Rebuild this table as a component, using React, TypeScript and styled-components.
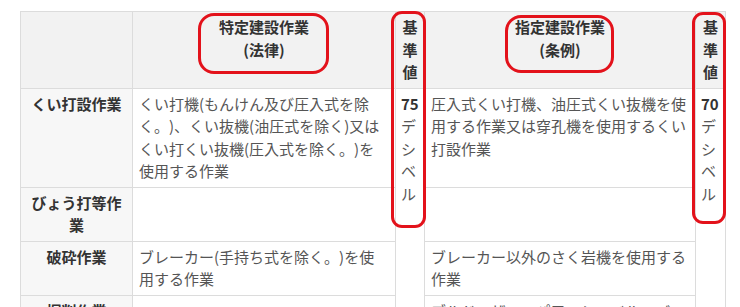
import React from "react";
import styled, { createGlobalStyle } from "styled-components";

const Global = createGlobalStyle`
  html, body { margin: 0; padding: 0; background: #ffffff; }
  body { font-family: "Noto Sans CJK JP", "Noto Sans", sans-serif; }
`;

const Page = styled.div`
  position: relative;
  padding: 11px 0 0 20px;
  width: 740px;
  box-sizing: border-box;
`;

const Table = styled.table`
  border-collapse: collapse;
  table-layout: fixed;
  width: 705px;
  font-size: 15px;
  line-height: 22.5px;
  text-spacing-trim: space-all;
  font-feature-settings: normal;
`;

const HeadCell = styled.th`
  background: #f2f2f2;
  border: 1px solid #dcdcdc;
  color: #333;
  font-weight: 700;
  padding: 4px 6px;
  text-align: center;
  vertical-align: top;
`;

const RowHead = styled.th`
  background: #f7f7f7;
  border: 1px solid #dcdcdc;
  color: #333;
  font-weight: 700;
  padding: 4px 6px;
  text-align: center;
  vertical-align: top;
`;

const Cell = styled.td`
  background: #fff;
  border: 1px solid #dcdcdc;
  color: #555;
  padding: 4px 6px;
  text-align: left;
  vertical-align: top;
`;

const ValueCell = styled.td`
  background: #fff;
  border: 1px solid #dcdcdc;
  color: #555;
  padding: 4px 5px;
  text-align: left;
  vertical-align: top;
  white-space: nowrap;
`;

const Num = styled.b`
  color: #333;
  font-weight: 700;
`;

const Mark = styled.div<{ $x: number; $y: number; $w: number; $h: number; $r: number }>`
  position: absolute;
  left: ${(p) => p.$x}px;
  top: ${(p) => p.$y}px;
  width: ${(p) => p.$w}px;
  height: ${(p) => p.$h}px;
  border: 3px solid #e3121b;
  border-radius: ${(p) => p.$r}px;
  box-sizing: border-box;
  pointer-events: none;
`;

const Value = ({ n }: { n: string }) => (
  <>
    <Num>{n}</Num>
    <br />デ<br />シ<br />ベ<br />ル
  </>
);

export default function App() {
  return (
    <>
      <Global />
      <Page>
        <Table>
          <colgroup>
            <col style={{ width: 112 }} />
            <col style={{ width: 263 }} />
            <col style={{ width: 29 }} />
            <col style={{ width: 271 }} />
            <col style={{ width: 30 }} />
          </colgroup>
          <thead>
            <tr>
              <HeadCell />
              <HeadCell>
                特定建設作業
                <br />(法律)
              </HeadCell>
              <HeadCell>
                基<br />準<br />値
              </HeadCell>
              <HeadCell>
                指定建設作業
                <br />(条例)
              </HeadCell>
              <HeadCell>
                基<br />準<br />値
              </HeadCell>
            </tr>
          </thead>
          <tbody>
            <tr>
              <RowHead>くい打設作業</RowHead>
              <Cell>
                くい打機(もんけん及び圧入式を除く。)、くい抜機(油圧式を除く)又はくい打くい抜機(圧入式を除く。)を使用する作業
              </Cell>
              <ValueCell rowSpan={5}>
                <Value n="75" />
              </ValueCell>
              <Cell>
                圧入式くい打機、油圧式くい抜機を使用する作業又は穿孔機を使用するくい打設作業
              </Cell>
              <ValueCell rowSpan={5}>
                <Value n="70" />
              </ValueCell>
            </tr>
            <tr>
              <RowHead>びょう打等作業</RowHead>
              <Cell />
              <Cell />
            </tr>
            <tr>
              <RowHead>破砕作業</RowHead>
              <Cell>ブレーカー(手持ち式を除く。)を使用する作業</Cell>
              <Cell>ブレーカー以外のさく岩機を使用する作業</Cell>
            </tr>
            <tr>
              <RowHead>掘削作業</RowHead>
              <Cell />
              <Cell>
                ブルドーザー、パワーショベル、バックホウその他これらに類する掘削機械を使用する作業
              </Cell>
            </tr>
          </tbody>
        </Table>
        <Mark $x={198} $y={13} $w={131} $h={61} $r={16} />
        <Mark $x={391} $y={11} $w={35} $h={217} $r={11} />
        <Mark $x={505} $y={15} $w={109} $h={58} $r={16} />
        <Mark $x={692} $y={12} $w={34} $h={212} $r={11} />
      </Page>
    </>
  );
}
